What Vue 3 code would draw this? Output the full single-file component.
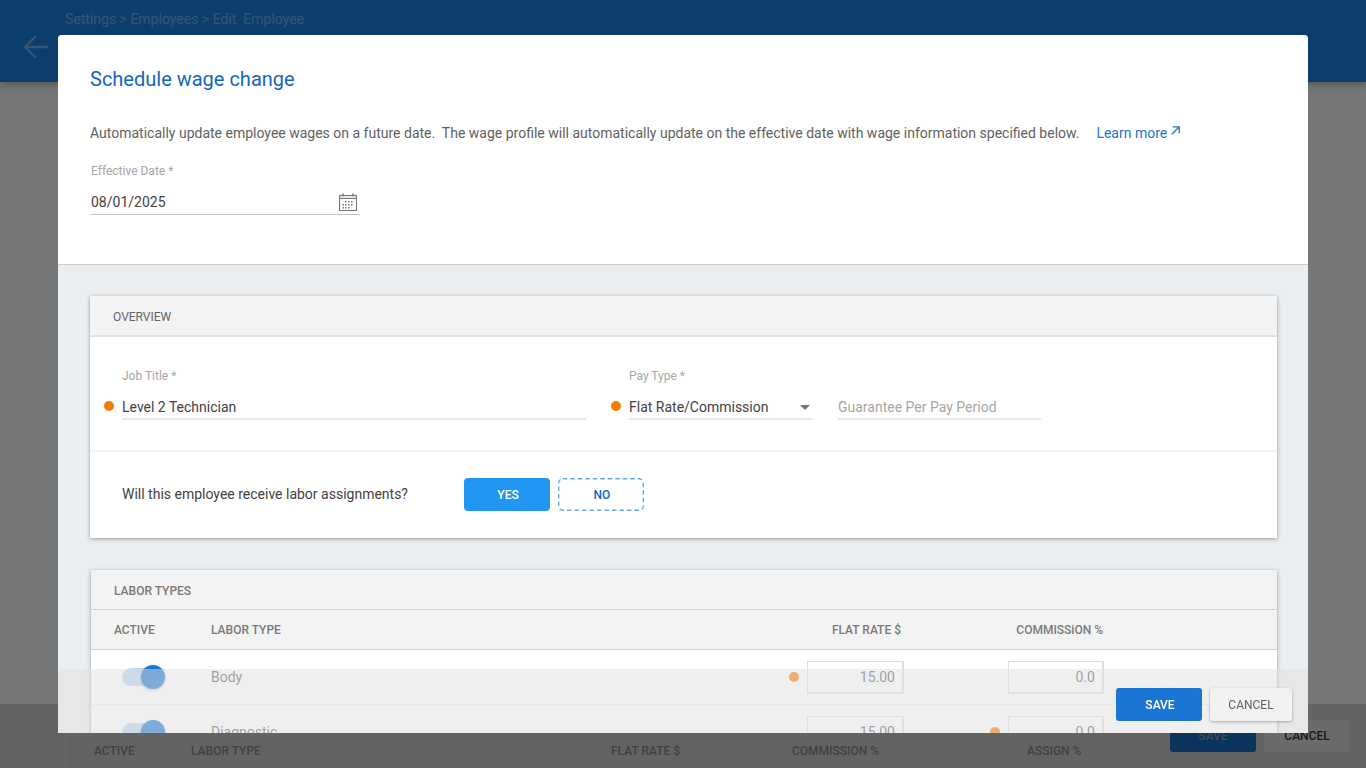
<script setup>
const laborTypes = [
  { name: 'Body', rate: '15.00', commission: '0.0', flagged: 'rate' },
  { name: 'Diagnostic', rate: '15.00', commission: '0.0', flagged: 'commission' },
  { name: 'Electrical', rate: '15.00', commission: '0.0', flagged: 'rate' }
]
</script>

<template>
  <div class="page">
    <header class="page-header">
      <div class="crumbs">Settings &gt; Employees &gt; Edit&nbsp; Employee</div>
      <svg class="back" width="28" height="28" viewBox="0 0 28 28">
        <path d="M26 14H3M14 3 3 14l11 11" fill="none" stroke="#fff" stroke-width="2.4" />
      </svg>
    </header>
    <div class="page-fill"></div>
    <div class="page-bottom">
      <div class="bottom-cols">
        <span style="width: 97px">ACTIVE</span>
        <span style="width: 420px">LABOR TYPE</span>
        <span style="width: 181px">FLAT RATE $</span>
        <span style="width: 235px">COMMISSION %</span>
        <span style="width: 143px">ASSIGN %</span>
      </div>
      <div class="bottom-btn bottom-save">SAVE</div>
      <div class="bottom-btn bottom-cancel">CANCEL</div>
    </div>
  </div>

  <div class="backdrop"></div>

  <div class="modal">
    <section class="modal-top">
      <h1 class="modal-title">Schedule wage change</h1>
      <p class="modal-text">
        <span>Automatically update employee wages on a future date.&nbsp; The wage profile will automatically update on the effective date with wage information specified below.</span>
        <a class="learn-more">Learn more
          <svg width="9" height="9" viewBox="0 0 9 9">
            <path d="M.8 8.200 7.800 1.200M1.800.8h6.400v6.400" fill="none" stroke="#1976d2" stroke-width="1.3" />
          </svg>
        </a>
      </p>
      <div class="date-field">
        <label class="field-label">Effective Date *</label>
        <div class="date-input">
          <span>08/01/2025</span>
          <svg width="18" height="18" viewBox="0 0 18 18">
            <path d="M.5 2.500h17v15H.5z" fill="none" stroke="#757575" stroke-width="1.100" />
            <path d="M.5 2.500h17v3H.5z" fill="#eeeeee" stroke="#757575" stroke-width="1.100" />
            <path d="M4 .5v3M14 .5v3" fill="none" stroke="#757575" stroke-width="1.400" />
            <path d="M6 8h1.500v1.500H6zM9 8h1.500v1.500H9zM12 8h1.500v1.500H12zM3.500 11H5v1.500H3.500zM6 11h1.500v1.500H6zM9 11h1.500v1.500H9zM12 11h1.500v1.500H12zM3.500 14H5v1.500H3.500zM6 14h1.500v1.500H6zM9 14h1.500v1.500H9z" fill="#757575" />
          </svg>
        </div>
      </div>
    </section>

    <section class="modal-body">
      <div class="card overview">
        <div class="card-head">OVERVIEW</div>
        <div class="overview-fields">
          <div class="field job-title">
            <label class="field-label">Job Title *</label>
            <div class="field-value"><i class="dot"></i>Level 2 Technician</div>
          </div>
          <div class="field pay-type">
            <label class="field-label">Pay Type *</label>
            <div class="field-value">
              <i class="dot"></i>Flat Rate/Commission
              <b class="caret"></b>
            </div>
          </div>
          <div class="field guarantee">
            <div class="field-value placeholder">Guarantee Per Pay Period</div>
          </div>
        </div>
        <div class="assign-row">
          <span class="assign-question">Will this employee receive labor assignments?</span>
          <button class="choice choice-on">YES</button>
          <button class="choice choice-off">
            <svg class="dashes" width="86" height="33" viewBox="0 0 86 33">
              <rect x=".75" y=".75" width="84.500" height="31.500" rx="4" fill="none" stroke="#64a5ec" stroke-width="1.300" stroke-dasharray="4.500 3" />
            </svg>
            NO
          </button>
        </div>
      </div>

      <div class="card labor">
        <div class="labor-title">LABOR TYPES</div>
        <div class="labor-grid labor-cols">
          <span>ACTIVE</span>
          <span>LABOR TYPE</span>
          <span class="col-right col-rate">FLAT RATE $</span>
          <span></span>
          <span class="col-right">COMMISSiON %</span>
        </div>
        <div v-for="row in laborTypes" :key="row.name" class="labor-grid labor-row">
          <span class="toggle"><i class="knob"></i></span>
          <span class="labor-name">{{ row.name }}</span>
          <span class="amount">
            <i v-if="row.flagged === 'rate'" class="dot"></i>{{ row.rate }}
          </span>
          <span></span>
          <span class="amount">
            <i v-if="row.flagged === 'commission'" class="dot"></i>{{ row.commission }}
          </span>
        </div>
      </div>
    </section>

    <footer class="modal-footer">
      <button class="footer-btn footer-save">SAVE</button>
      <button class="footer-btn footer-cancel">CANCEL</button>
    </footer>
  </div>
</template>

<style>
html, body {
  margin: 0;
  height: 100%;
  overflow: hidden;
}
</style>

<style scoped>
.page {
  height: 100vh;
  display: flex;
  flex-direction: column;
  background: #ebedef;
  font-family: Roboto, "Liberation Sans", sans-serif;
}

.page-header {
  height: 82px;
  box-sizing: border-box;
  padding: 11px 0 0 22px;
  background: #1a7bd8;
  color: #fff;
  box-shadow: 0 2px 8px rgba(0, 0, 0, 0.3);
  position: relative;
}

.crumbs {
  margin-left: 43px;
  font-size: 14px;
  line-height: 17px;
  opacity: 0.35;
}

.back {
  display: block;
  margin-top: 5px;
  opacity: 0.35;
}

.page-fill {
  flex: 1;
}

.page-bottom {
  height: 64px;
  box-sizing: border-box;
  padding-left: 70px;
  display: flex;
  background: #c6c6c6;
  font-size: 12px;
  font-weight: 500;
  color: #828282;
}

.bottom-cols {
  display: flex;
  align-items: flex-end;
  padding: 0 0 10px 23px;
  border-left: 1px solid #b8b8b8;
}

.bottom-cols span {
  flex: none;
}

.bottom-btn {
  height: 32px;
  margin-top: 16px;
  border-radius: 3px;
  display: flex;
  align-items: center;
  justify-content: center;
}

.bottom-save {
  width: 86px;
  background: #1569b8;
  color: #7d98b4;
}

.bottom-cancel {
  width: 86px;
  margin-left: 8px;
  background: #d6d6d6;
  color: #333;
}

.backdrop {
  position: fixed;
  inset: 0;
  background: rgba(0, 0, 0, 0.5);
}

.modal {
  position: fixed;
  left: 58px;
  top: 35px;
  width: 1250px;
  height: 698px;
  overflow: hidden;
  border-radius: 4px 4px 0 0;
  background: #eaeef1;
  font-family: Roboto, "Liberation Sans", sans-serif;
}

.modal-top {
  height: 230px;
  box-sizing: border-box;
  padding: 32px 32px 0;
  background: #fff;
  border-bottom: 1px solid #c8cacc;
}

.modal-title {
  margin: 0;
  font-size: 20px;
  line-height: 25px;
  font-weight: 400;
  color: #1565c0;
}

.modal-text {
  display: flex;
  margin: 33px 0 0;
  font-size: 14px;
  line-height: 17px;
  color: #616161;
}

.learn-more {
  display: flex;
  align-items: flex-start;
  gap: 4px;
  margin-left: 17px;
  color: #1976d2;
}

.learn-more svg {
  margin-top: 1px;
}

.date-field {
  width: 270px;
  margin-top: 22px;
}

.field-label {
  display: block;
  font-size: 12px;
  line-height: 14px;
  color: #a6a6a6;
  padding-left: 1px;
}

.date-input {
  display: flex;
  align-items: center;
  justify-content: space-between;
  height: 24px;
  padding: 0 3px 0 1px;
  margin-top: 12px;
  font-size: 14px;
  color: #424242;
  border-bottom: 1px solid #c4c4c4;
}

.modal-body {
  padding: 31px 31px 0 32px;
}

.card {
  background: #fff;
  box-shadow: 0 1px 4px rgba(0, 0, 0, 0.35);
}

.card-head {
  height: 41px;
  box-sizing: border-box;
  padding: 14px 0 0 23px;
  background: #f3f3f3;
  border-bottom: 2px solid #e2e2e2;
  font-size: 12px;
  line-height: 14px;
  color: #666;
}

.overview-fields {
  height: 115px;
  box-sizing: border-box;
  padding: 32px 0 0 32px;
  display: flex;
  border-bottom: 2px solid #f5f5f5;
}

.field {
  flex: none;
}

.job-title {
  width: 464px;
  margin-right: 43px;
}

.pay-type {
  width: 184px;
  margin-right: 25px;
}

.guarantee {
  width: 203px;
  padding-top: 14px;
}

.field .field-label {
  padding-left: 0;
}

.field-value {
  position: relative;
  height: 24px;
  box-sizing: border-box;
  margin-top: 13px;
  font-size: 14px;
  line-height: 22px;
  color: #424242;
  border-bottom: 2px solid #e8e8e8;
}

.placeholder {
  color: #a6a6a6;
}

.dot {
  position: absolute;
  left: -18px;
  top: 5px;
  width: 10px;
  height: 10px;
  border-radius: 50%;
  background: #f57c00;
}

.caret {
  position: absolute;
  right: 3px;
  top: 9px;
  border-left: 5px solid transparent;
  border-right: 5px solid transparent;
  border-top: 5px solid #757575;
}

.assign-row {
  height: 86px;
  box-sizing: border-box;
  padding: 26px 0 0 32px;
  display: flex;
  align-items: flex-start;
}

.assign-question {
  width: 342px;
  font-size: 14px;
  line-height: 33px;
  color: #424242;
}

.choice {
  width: 86px;
  height: 33px;
  padding: 0 0 0 2px;
  border-radius: 4px;
  font-family: inherit;
  font-size: 12px;
  font-weight: 500;
}

.choice-on {
  background: #2196f3;
  border: 0;
  color: #fff;
}

.choice-off {
  position: relative;
  margin-left: 8px;
  background: #fff;
  border: 0;
  color: #1565c0;
}

.dashes {
  position: absolute;
  left: 0;
  top: 0;
}

.labor {
  margin: 32px 0 0 1px;
}

.labor-title {
  height: 40px;
  box-sizing: border-box;
  padding: 14px 0 0 23px;
  background: #f3f3f3;
  border-bottom: 1px solid #d4d4d4;
  font-size: 12px;
  line-height: 14px;
  font-weight: 500;
  color: #7a7a7a;
}

.labor-grid {
  display: grid;
  grid-template-columns: 97px 1fr 97px 104px 96px;
  padding: 0 173px 0 23px;
  align-items: center;
}

.labor-cols {
  height: 40px;
  box-sizing: border-box;
  background: #f3f3f3;
  border-bottom: 1px solid #d4d4d4;
  font-size: 12px;
  font-weight: 500;
  color: #7a7a7a;
}

.col-right {
  text-align: right;
  padding-right: 1px;
  white-space: nowrap;
}

.col-rate {
  padding-right: 3px;
}

.labor-row {
  height: 55px;
  box-sizing: border-box;
  border-bottom: 1px solid #eeeeee;
}

.toggle {
  position: relative;
  display: block;
  width: 34px;
  height: 18px;
  margin-left: 8px;
  border-radius: 9px;
  background: #bbd6f0;
}

.knob {
  position: absolute;
  right: -9px;
  top: -3px;
  width: 24px;
  height: 24px;
  border-radius: 50%;
  background: #1976d2;
  box-shadow: 0 1px 3px rgba(0, 0, 0, 0.3);
}

.labor-name {
  font-size: 14px;
  color: #616161;
}

.amount {
  position: relative;
  height: 33px;
  box-sizing: border-box;
  padding-right: 7px;
  border: 1px solid #dedede;
  border-width: 1px 2px 2px 1px;
  font-size: 14px;
  line-height: 31px;
  text-align: right;
  color: #616161;
}

.amount .dot {
  left: -19px;
  top: 10px;
}

.modal-footer {
  position: absolute;
  left: 0;
  right: 0;
  bottom: 0;
  height: 64px;
  display: flex;
  justify-content: flex-end;
  align-items: flex-start;
  gap: 8px;
  padding: 19px 16px 0 0;
  box-sizing: border-box;
  background: rgba(224, 224, 224, 0.5);
}

.footer-btn {
  height: 33px;
  padding: 0;
  border: 0;
  border-radius: 3px;
  font-family: inherit;
  font-size: 12px;
}

.footer-save {
  width: 86px;
  padding-left: 2px;
  background: #1976d2;
  color: #fff;
  font-weight: 500;
}

.footer-cancel {
  width: 82px;
  background: #f1f1f1;
  color: #616161;
  box-shadow: 0 1px 3px rgba(0, 0, 0, 0.3);
}
</style>
